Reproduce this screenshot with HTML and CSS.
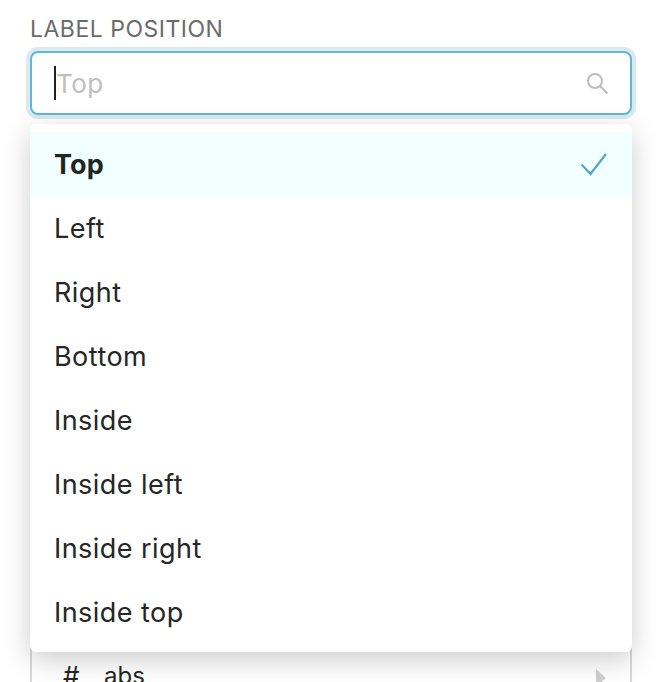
FILE: index.html
```html
<!DOCTYPE html>
<html lang="en">
<head>
    <meta charset="UTF-8">
    <title>Label position</title>
    <link rel="stylesheet" href="styles.css">
</head>
<body>
    <div class="field">
        <div class="field-label">LABEL POSITION</div>
        <div class="search-box">
            <span class="caret"></span>
            <span class="placeholder">Top</span>
            <svg class="search-icon" width="24" height="24" viewBox="0 0 24 24" fill="none">
                <circle cx="10" cy="10" r="7" stroke="#bdbdbd" stroke-width="2"/>
                <path d="M15 15l7.500 7.500" stroke="#bdbdbd" stroke-width="2"/>
            </svg>
        </div>

        <div class="columns">
            <div class="column-row">
                <span class="column-type">#</span>
                <span class="column-name">abs</span>
                <span class="column-arrow"></span>
            </div>
        </div>

        <div class="menu">
            <div class="menu-item selected">
                Top
                <svg class="check-icon" width="28" height="24" viewBox="0 0 28 24" fill="none">
                    <path d="M1.500 12.500l9 9.500L26 2" stroke="#4fa8c7" stroke-width="2.200"/>
                </svg>
            </div>
            <div class="menu-item">Left</div>
            <div class="menu-item">Right</div>
            <div class="menu-item">Bottom</div>
            <div class="menu-item">Inside</div>
            <div class="menu-item">Inside left</div>
            <div class="menu-item">Inside right</div>
            <div class="menu-item">Inside top</div>
        </div>
    </div>
</body>
</html>
```

FILE: styles.css
```css
* {
    box-sizing: border-box;
    margin: 0;
    padding: 0;
}

html, body {
    height: 100%;
    overflow: hidden;
}

body {
    font-family: Inter, 'Liberation Sans', sans-serif;
    background-color: white;
    color: #262626;
}

.field {
    position: relative;
    padding: 14px 30px 0;
}

.field-label {
    font-size: 23px;
    line-height: 30px;
    letter-spacing: 0.5px;
    color: #6b6b6b;
    margin-bottom: 7px;
}

.search-box {
    display: flex;
    align-items: center;
    height: 64px;
    padding: 0 21px 0 22px;
    border: 2px solid #62b8d2;
    border-radius: 8px;
    background-color: white;
    box-shadow: 0 0 0 4px #dbe9f0;
}

.caret {
    width: 2px;
    height: 34px;
    background-color: #222;
}

.placeholder {
    flex: 1;
    font-size: 26px;
    letter-spacing: 0.5px;
    color: #c0c0c0;
}

.columns {
    height: 47px;
    margin-top: 520px;
    padding-top: 18px;
    overflow: hidden;
    border: 2px solid #d9d9d9;
    border-top: none;
    border-bottom: none;
}

.column-row {
    display: flex;
    align-items: center;
    height: 44px;
    padding: 0 24px 0 31px;
    font-size: 24px;
}

.column-type {
    width: 41px;
    font-size: 26px;
    font-weight: 400;
}

.column-name {
    flex: 1;
}

.column-arrow {
    margin-top: 6px;
    border-left: 10px solid #d0d0d0;
    border-top: 9px solid transparent;
    border-bottom: 9px solid transparent;
}

.menu {
    position: absolute;
    top: 124px;
    left: 30px;
    width: 602px;
    padding: 8px 0;
    border-radius: 6px;
    background-color: white;
    box-shadow: 0 8px 28px rgba(0, 0, 0, 0.2);
}

.menu-item {
    display: flex;
    align-items: center;
    justify-content: space-between;
    height: 64px;
    padding: 0 24px;
    font-size: 27px;
    letter-spacing: 0.45px;
}

.menu-item.selected {
    background-color: #f2ffff;
    font-weight: 700;
    letter-spacing: 0.15px;
    color: #1f2626;
}
```
